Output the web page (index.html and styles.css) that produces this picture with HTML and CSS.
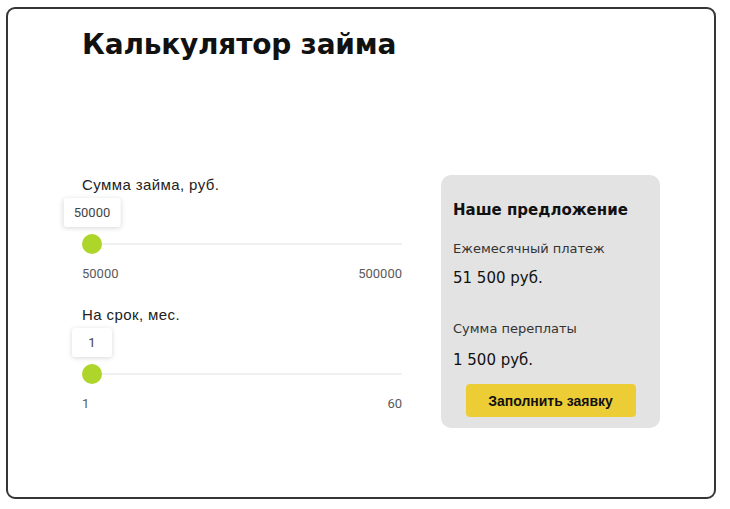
FILE: index.html
```html
<!DOCTYPE html>
<html lang="ru">
<head>
<meta charset="utf-8">
<title>Калькулятор займа</title>
<link rel="stylesheet" href="styles.css">
</head>
<body>
<div class="card">
  <h1 class="title">Калькулятор займа</h1>
  <div class="calc">
    <div class="controls">
      <div class="field">
        <div class="field-label">Сумма займа, руб.</div>
        <div class="slider">
          <div class="tip" style="left: 10px">50000</div>
          <div class="track"></div>
          <div class="thumb" style="left: 10px"></div>
        </div>
        <div class="scale"><span>50000</span><span>500000</span></div>
      </div>
      <div class="field">
        <div class="field-label">На срок, мес.</div>
        <div class="slider">
          <div class="tip" style="left: 10px">1</div>
          <div class="track"></div>
          <div class="thumb" style="left: 10px"></div>
        </div>
        <div class="scale"><span>1</span><span>60</span></div>
      </div>
    </div>
    <div class="offer">
      <div class="offer-title">Наше предложение</div>
      <div class="offer-label">Ежемесячный платеж</div>
      <div class="offer-value">51 500 руб.</div>
      <div class="offer-label second">Сумма переплаты</div>
      <div class="offer-value">1 500 руб.</div>
      <button class="apply">Заполнить заявку</button>
    </div>
  </div>
</div>
</body>
</html>
```
FILE: styles.css
```css
html, body {
  margin: 0;
  padding: 0;
  background: #fff;
}
.card {
  box-sizing: border-box;
  width: 710px;
  height: 492px;
  margin: 7px 0 0 6px;
  border: 2px solid #363636;
  border-radius: 9px;
  padding: 0 0 0 74px;
}
.title {
  margin: 19px 0 0 0;
  font-family: "DejaVu Sans", sans-serif;
  font-weight: bold;
  font-size: 28px;
  letter-spacing: -0.2px;
  line-height: 34px;
  color: #111;
}
.calc {
  display: flex;
  gap: 39px;
  margin-top: 113px;
  align-items: flex-start;
}
.controls {
  width: 320px;
}
.field {
  padding-top: 1px;
}
.field + .field {
  margin-top: 23px;
}
.field-label {
  font-family: "Liberation Sans", Arial, sans-serif;
  font-size: 15px;
  letter-spacing: 0.4px;
  line-height: 17px;
  color: #222;
}
.slider {
  position: relative;
  height: 69px;
}
.track {
  position: absolute;
  left: 0;
  right: 0;
  top: 50px;
  height: 2px;
  background: #f0f0f0;
}
.thumb {
  position: absolute;
  top: 41px;
  width: 20px;
  height: 20px;
  margin-left: -10px;
  border-radius: 50%;
  background: #add52a;
}
.tip {
  position: absolute;
  top: 5px;
  transform: translateX(-50%);
  box-sizing: border-box;
  min-width: 40px;
  height: 29px;
  padding: 0 10px;
  background: #fff;
  border-radius: 3px;
  box-shadow: 0 1px 5px rgba(0, 0, 0, 0.16);
  font-family: Roboto, sans-serif;
  font-size: 13px;
  line-height: 29px;
  text-align: center;
  color: #444;
}
.scale {
  display: flex;
  justify-content: space-between;
  margin-top: 4px;
  font-family: Roboto, sans-serif;
  font-size: 13px;
  line-height: 16px;
  color: #5a5a5a;
}
.offer {
  box-sizing: border-box;
  width: 219px;
  height: 253px;
  padding: 25px 12px 0 12px;
  background: #e3e3e3;
  border-radius: 10px;
  font-family: "DejaVu Sans", sans-serif;
  display: flex;
  flex-direction: column;
}
.offer-title {
  font-size: 15px;
  font-weight: bold;
  line-height: 20px;
  color: #111;
}
.offer-label {
  margin-top: 21px;
  font-size: 13px;
  line-height: 16px;
  color: #333;
}
.offer-label.second {
  margin-top: 34px;
}
.offer-value {
  margin-top: 12px;
  font-size: 15px;
  line-height: 18px;
  color: #111;
}
.offer-label.second + .offer-value {
  margin-top: 14px;
}
.apply {
  align-self: center;
  width: 170px;
  height: 33px;
  margin-top: 15px;
  border: 0;
  border-radius: 4px;
  background: #edcd36;
  font-family: "Liberation Sans", Arial, sans-serif;
  font-weight: bold;
  font-size: 14px;
  color: #111;
  padding: 0;
}
```
